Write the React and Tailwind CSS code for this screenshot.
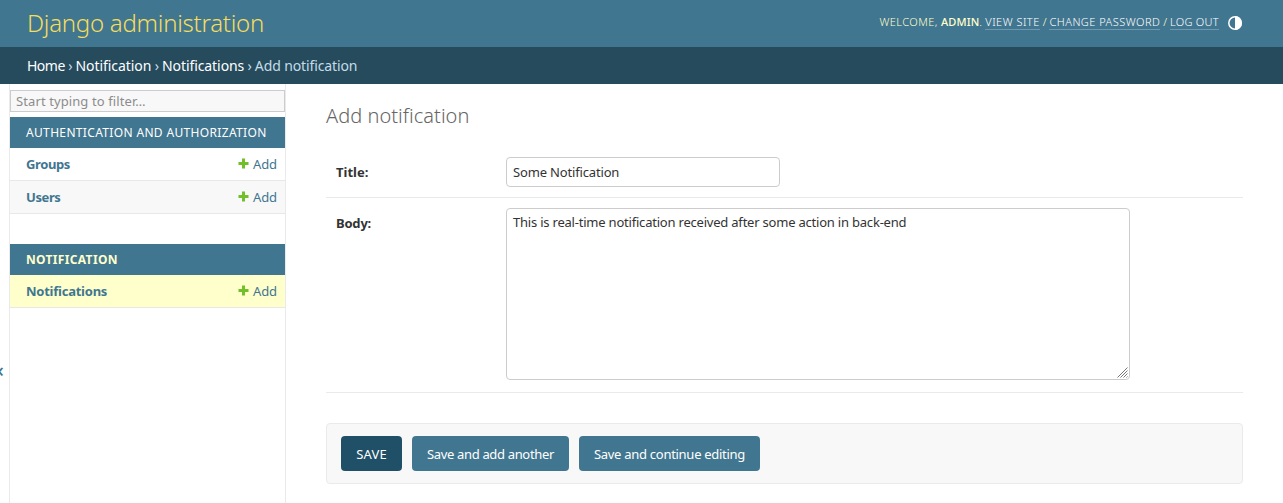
import React from "react";

function AddLink() {
  return (
    <a href="#" className="flex items-center text-[13px] text-[#417690]">
      <svg width="11" height="11" viewBox="0 0 11 11" className="mr-1 -mt-1">
        <path d="M4 .5h3v3.5h3.5v3H7v3.5H4V7H.5V4H4z" fill="#70bf2b" />
      </svg>
      <span className="tracking-[-0.1px]">Add</span>
    </a>
  );
}

function Row({ name, className, nameClass }) {
  return (
    <div className={"flex h-[33px] items-center justify-between border-b border-[#e8e8e8] pt-0.5 pr-2 pl-4 " + className}>
      <a href="#" className={"text-[13px] font-bold text-[#417690] " + nameClass}>{name}</a>
      <AddLink />
    </div>
  );
}

function Sidebar() {
  return (
    <div className="flex shrink-0">
      <div className="flex w-[9px] items-center overflow-hidden pt-[153px] text-xl leading-none text-[#417690]">
        <span className="-ml-[7px] w-[10px] text-[20px] font-medium">«</span>
      </div>
      <nav className="w-[277px] border-x border-[#eaeaea] pt-1.5">
        <input
          placeholder="Start typing to filter…"
          className="block h-[22px] w-full border border-[#ccc] bg-[#f8f8f8] px-[5px] text-[13px] tracking-[0.1px] placeholder:text-[#8c8c8c] placeholder:opacity-100"
        />
        <div className="mt-[5px] flex h-[31px] items-center bg-[#417690] pl-4 text-xs tracking-[0.34px] text-white">
          AUTHENTICATION AND AUTHORIZATION
        </div>
        <Row name="Groups" className="bg-white" nameClass="tracking-[-0.4px]" />
        <Row name="Users" className="bg-[#f8f8f8]" nameClass="tracking-[-0.4px]" />
        <div className="mt-[30px] flex h-[31px] items-center bg-[#417690] pl-4 text-xs font-bold tracking-[0.34px] text-[#ffc]">
          NOTIFICATION
        </div>
        <Row name="Notifications" className="bg-[#ffc]" nameClass="tracking-[-0.24px]" />
      </nav>
    </div>
  );
}

function Header() {
  return (
    <header className="flex h-[47px] shrink-0 items-center justify-between bg-[#417690] pr-[41px] pl-[27px]">
      <h1 className="-mt-px text-2xl font-light tracking-[-0.25px] text-[#f5dd5d]">Django administration</h1>
      <div className="flex items-center pb-0.5 text-[11px] text-[#ffc]">
        <div className="flex items-baseline leading-[14px] whitespace-pre">
          <span className="font-light tracking-[0.45px]">WELCOME, </span>
          <strong className="font-medium tracking-[0.1px]">ADMIN</strong>
          <span className="font-light tracking-[0.2px]">. </span>
          <a href="#" className="border-b border-white/25 font-light tracking-[0.5px] text-white">VIEW SITE</a>
          <span className="font-light tracking-[0.05px]"> / </span>
          <a href="#" className="border-b border-white/25 font-light tracking-[0.47px] text-white">CHANGE PASSWORD</a>
          <span className="font-light tracking-[0.05px]"> / </span>
          <a href="#" className="border-b border-white/25 font-light tracking-[0.3px] text-white">LOG OUT</a>
        </div>
        <svg width="14" height="14" viewBox="0 0 14 14" className="ml-[9px]">
          <circle cx="7" cy="7" r="6.2" fill="none" stroke="#fff" strokeWidth="1.5" />
          <path d="M7 0a7 7 0 0 1 0 14z" fill="#fff" />
        </svg>
      </div>
    </header>
  );
}

function Crumb({ children, className }) {
  return <a href="#" className={"text-white " + className}>{children}</a>;
}

function Separator() {
  return <span className="tracking-[-0.33px]"> › </span>;
}

export default function App() {
  return (
    <div className="flex h-[503px] flex-col overflow-hidden bg-white font-['Noto_Sans','Open_Sans',sans-serif] text-[13px] text-[#333]">
      <Header />
      <div className="flex h-[37px] shrink-0 items-center bg-[#264b5d] pl-[27px] text-sm whitespace-pre text-[#c4dce8]">
        <Crumb className="tracking-[-0.5px]">Home</Crumb>
        <Separator />
        <Crumb className="tracking-[-0.06px]">Notification</Crumb>
        <Separator />
        <Crumb className="tracking-[-0.08px]">Notifications</Crumb>
        <Separator />
        <span className="tracking-[-0.12px]">Add notification</span>
      </div>
      <div className="flex min-h-0 flex-1">
        <Sidebar />
        <main className="flex-1 pr-10 pl-10">
          <h2 className="mt-[19px] text-xl leading-[26px] font-light tracking-[0.04px] text-[#666]">Add notification</h2>
          <div className="mt-[18px] flex h-[51px] items-start border-b border-[#eaeaea] pt-2.5 pl-2.5">
            <label className="w-[170px] pt-[5px] leading-5 font-bold">Title:</label>
            <input defaultValue="Some Notification" className="h-[30px] w-[274px] rounded border border-[#ccc] px-1.5 tracking-[-0.16px]" />
          </div>
          <div className="flex h-[195px] items-start border-b border-[#eaeaea] pt-2.5 pl-2.5">
            <label className="w-[170px] pt-[5px] leading-5 font-bold tracking-[-0.2px]">Body:</label>
            <div className="relative">
              <textarea
                defaultValue="This is real-time notification received after some action in back-end"
                className="block h-[172px] w-[624px] resize-none rounded border border-[#ccc] px-1.5 py-1 leading-[18px] tracking-[-0.21px]"
              />
              <svg width="11" height="11" viewBox="0 0 11 11" className="absolute right-0.5 bottom-0.5">
                <path d="M.5 10.5l10-10M3.5 10.5l7-7M6.5 10.5l4-4M9.5 10.5l1-1" stroke="#777" fill="none" />
              </svg>
            </div>
          </div>
          <div className="mt-[30px] flex h-[61px] items-center gap-2.5 rounded border border-[#eaeaea] bg-[#f8f8f8] px-3.5 text-white">
            <button className="h-[35px] w-[61px] rounded bg-[#205067] pt-0.5 tracking-[0.15px]">SAVE</button>
            <button className="h-[35px] w-[157px] rounded bg-[#417690] pt-0.5 tracking-[-0.34px]">Save and add another</button>
            <button className="h-[35px] w-[181px] rounded bg-[#417690] pt-0.5 tracking-[-0.28px]">Save and continue editing</button>
          </div>
        </main>
      </div>
    </div>
  );
}
